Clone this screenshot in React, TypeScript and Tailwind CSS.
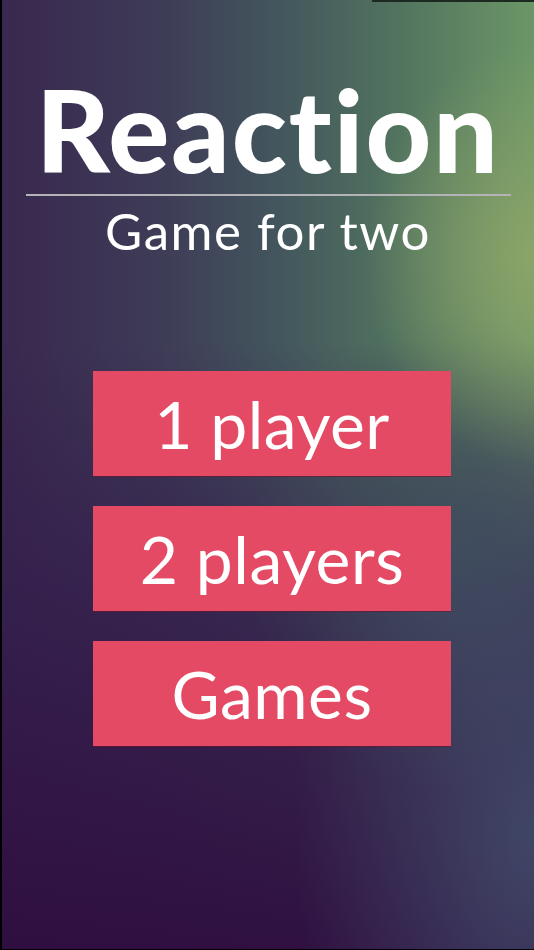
const buttons = ['1 player', '2 players', 'Games']

function MenuButton({ label }: { label: string }) {
  return (
    <button className="flex h-[105px] w-[358px] items-center justify-center bg-[#e54a64] text-white shadow-[0_1px_0_rgba(110,20,40,0.6)]">
      <span className="text-[66px] font-normal leading-[66px] tracking-[0.5px]">{label}</span>
    </button>
  )
}

export default function App() {
  return (
    <div
      className="relative flex h-[950px] w-[534px] flex-col items-center overflow-hidden border-b border-l-2 border-black bg-[radial-gradient(ellipse_32%_22%_at_100%_27%,rgba(150,170,105,0.75),transparent),radial-gradient(ellipse_45%_45%_at_100%_88%,rgba(64,72,104,0.95),transparent),radial-gradient(ellipse_40%_25%_at_85%_58%,rgba(62,82,92,0.8),transparent),linear-gradient(to_bottom,transparent_0%,transparent_36%,rgba(52,30,76,0.8)_62%,rgba(47,14,64,0.97)_100%),linear-gradient(to_right,#39284f_0%,#3e3c57_30%,#43565d_52%,#52745f_75%,#6c9667_100%)]"
      style={{ fontFamily: 'Lato, "Noto Sans", sans-serif' }}
    >
      <div className="absolute right-0 top-0 h-[2px] w-[162px] bg-[#1d2a22]" />

      <h1 className="mt-[73px] h-[112px] text-[114px] font-black leading-[112px] tracking-[2px] text-white">
        Reaction
      </h1>
      <div className="mt-[9px] h-[2px] w-[485px] bg-[#b4b4b8]" />
      <p className="mt-[10px] h-[50px] text-[51px] font-normal leading-[50px] tracking-[1.5px] text-white">
        Game for two
      </p>

      <div className="ml-[8px] mt-[115px] flex flex-col gap-[30px]">
        {buttons.map((b) => (
          <MenuButton key={b} label={b} />
        ))}
      </div>
    </div>
  )
}
